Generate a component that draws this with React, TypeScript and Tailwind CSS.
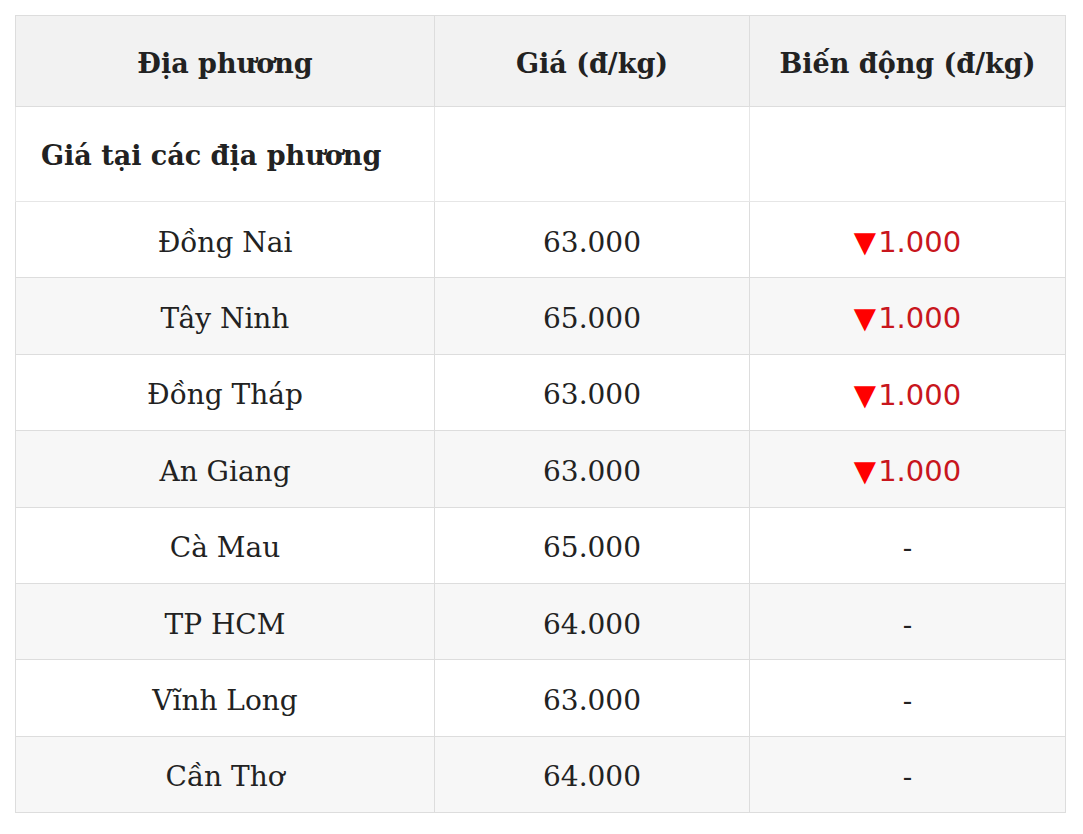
import React from "react";

const rows: { name: string; price: string; change: string | null }[] = [
  { name: "Đồng Nai", price: "63.000", change: "1.000" },
  { name: "Tây Ninh", price: "65.000", change: "1.000" },
  { name: "Đồng Tháp", price: "63.000", change: "1.000" },
  { name: "An Giang", price: "63.000", change: "1.000" },
  { name: "Cà Mau", price: "65.000", change: null },
  { name: "TP HCM", price: "64.000", change: null },
  { name: "Vĩnh Long", price: "63.000", change: null },
  { name: "Cần Thơ", price: "64.000", change: null },
];

export default function App() {
  return (
    <div className="bg-white w-[1083px] h-[834px] pt-[15px] pl-[15px] text-[#222] font-['DejaVu_Serif',serif]">
      <table className="w-[1050px] border-collapse table-fixed">
        <colgroup>
          <col className="w-[419px]" />
          <col className="w-[315px]" />
          <col className="w-[316px]" />
        </colgroup>
        <thead>
          <tr className="h-[91px] bg-[#f2f2f2]">
            <th className="border border-[#dddddd] text-[27px] font-bold text-center pt-[6px]">Địa phương</th>
            <th className="border border-[#dddddd] text-[27px] font-bold text-center pt-[6px]">Giá (đ/kg)</th>
            <th className="border border-[#dddddd] text-[27px] font-bold text-center pt-[6px]">Biến động (đ/kg)</th>
          </tr>
        </thead>
        <tbody>
          <tr className="h-[95px] bg-white">
            <td className="border border-[#e6e6e6] text-[27px] font-bold text-left pl-[25px] pt-[5px]">Giá tại các địa phương</td>
            <td className="border border-[#e6e6e6]"></td>
            <td className="border border-[#e6e6e6]"></td>
          </tr>
          {rows.map((r, i) => (
            <tr key={r.name} className={`h-[76.4px] ${i % 2 === 1 ? "bg-[#f7f7f7]" : "bg-white"}`}>
              <td className="border border-[#dddddd] text-[28px] text-center pt-[6px]">{r.name}</td>
              <td className="border border-[#dddddd] text-[28px] text-center pt-[6px]">{r.price}</td>
              <td className="border border-[#dddddd] text-[28px] text-center pt-[6px]">
                {r.change ? (
                  <span className="font-['DejaVu_Sans',sans-serif] text-[29px] text-[#c8161d]">
                    <span className="text-[#ff0000] mr-[2px]">▼</span>
                    {r.change}
                  </span>
                ) : (
                  <span>-</span>
                )}
              </td>
            </tr>
          ))}
        </tbody>
      </table>
    </div>
  );
}
